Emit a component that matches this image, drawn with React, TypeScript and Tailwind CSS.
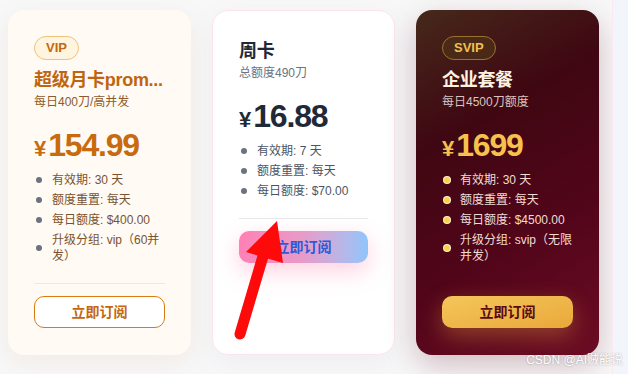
import React from "react";

type Plan = {
  badge?: string;
  title: string;
  subtitle: string;
  price: string;
  features: string[];
  variant: "gold" | "white" | "dark";
};

const plans: Plan[] = [
  {
    badge: "VIP",
    title: "超级月卡prom...",
    subtitle: "每日400刀/高并发",
    price: "154.99",
    features: ["有效期: 30 天", "额度重置: 每天", "每日额度: $400.00", "升级分组: vip（60并发）"],
    variant: "gold",
  },
  {
    title: "周卡",
    subtitle: "总额度490刀",
    price: "16.88",
    features: ["有效期: 7 天", "额度重置: 每天", "每日额度: $70.00"],
    variant: "white",
  },
  {
    badge: "SVIP",
    title: "企业套餐",
    subtitle: "每日4500刀额度",
    price: "1699",
    features: ["有效期: 30 天", "额度重置: 每天", "每日额度: $4500.00", "升级分组: svip（无限并发）"],
    variant: "dark",
  },
];

const styles = {
  gold: {
    card: "bg-[#fffaf3] shadow-[0_8px_28px_rgba(180,120,60,0.10)]",
    badge: "border-[#f1c27c] bg-[#fff4df] text-[#c4670f]",
    title: "text-[#c0650f]",
    subtitle: "text-[#8c5a2c]",
    price: "text-[#c86a0e]",
    dot: "bg-[#6b7280]",
    item: "text-[#7a5230]",
    divider: "bg-[#efe9e1]",
    button: "border border-[#d97b12] bg-white text-[#c4670f]",
  },
  white: {
    card: "bg-white border border-[#fde4ec] shadow-[0_8px_28px_rgba(120,120,140,0.08)]",
    badge: "",
    title: "text-[#1f2937]",
    subtitle: "text-[#6b7280]",
    price: "text-[#1f2937]",
    dot: "bg-[#6b7280]",
    item: "text-[#4b5563]",
    divider: "bg-[#e8e8ec]",
    button:
      "bg-gradient-to-r from-[#ff80b5] via-[#e79bc9] to-[#8ec5fc] text-[#2d5bd6] shadow-[0_8px_22px_rgba(255,120,170,0.35)]",
  },
  dark: {
    card: "bg-[linear-gradient(150deg,#46291a_0%,#3f0712_32%,#52051a_65%,#6c0c24_100%)] shadow-[0_10px_30px_rgba(90,10,30,0.25)]",
    badge: "border-[#9c7030] bg-[#4a2a17] text-[#f1c04f]",
    title: "text-[#fff3e0]",
    subtitle: "text-[#dcc3bd]",
    price: "text-[#f6c24c]",
    dot: "bg-[#fcd04f] ring-1 ring-[#fff3d0]",
    item: "text-[#f2dcd2]",
    divider: "bg-transparent",
    button:
      "bg-gradient-to-br from-[#f5c65a] to-[#e9a83a] text-[#5a0a12] shadow-[0_8px_22px_rgba(240,170,60,0.35)]",
  },
};

function PlanCard({ plan }: { plan: Plan }) {
  const s = styles[plan.variant];
  return (
    <div className={`flex flex-col rounded-2xl px-[26px] pt-[26px] pb-[27px] ${s.card}`}>
      {plan.badge && (
        <div className="mb-[6px] flex">
          <span
            className={`flex h-6 items-center rounded-full border px-[11px] text-[13px] font-bold ${s.badge}`}
          >
            {plan.badge}
          </span>
        </div>
      )}
      <h3 className={`text-[18px] leading-[28px] font-bold tracking-[-0.3px] whitespace-nowrap ${s.title}`}>
        {plan.title}
      </h3>
      <p className={`text-[12px] leading-4 ${s.subtitle}`}>{plan.subtitle}</p>

      <div className={`mt-[15px] flex items-baseline font-bold ${s.price}`}>
        <span className="mr-[2px] text-[22px] leading-10">¥</span>
        <span className="text-[32px] leading-10 tracking-[-1.2px]">{plan.price}</span>
      </div>

      <ul className="mt-px flex flex-col">
        {plan.features.map((f) => (
          <li key={f} className="flex items-center py-[2px]">
            <span className={`mr-[10px] ml-[2px] h-[6px] w-[6px] shrink-0 rounded-full ${s.dot}`} />
            <span className={`text-[12px] leading-4 ${s.item}`}>{f}</span>
          </li>
        ))}
      </ul>

      <div className={`mt-[17px] h-px ${s.divider}`} />

      <button
        className={`mt-[12px] flex h-[32px] items-center justify-center rounded-[10px] text-[14px] font-bold ${s.button}`}
      >
        立即订阅
      </button>
    </div>
  );
}

export default function App() {
  return (
    <div
      className="relative flex h-[374px] w-[628px] overflow-hidden bg-[#f8f8f9]"
      style={{ fontFamily: '"Liberation Sans", "Noto Sans CJK SC", sans-serif' }}
    >
      <div className="grid h-fit w-[612px] grid-cols-[183px_183px_183px] items-stretch gap-[21px] pt-[10px] pl-[8px]">
        {plans.map((p) => (
          <PlanCard key={p.title} plan={p} />
        ))}
      </div>
      <div className="h-full w-4 border-l border-[#fbe9ef] bg-[#f2f5fc]" />

      <svg className="absolute top-0 left-0" width="628" height="374" viewBox="0 0 628 374">
        <line x1="240" y1="334" x2="266" y2="246" stroke="#ff0a0a" strokeWidth="11" strokeLinecap="round" />
        <polygon points="277,221 246,252 283,263" fill="#ff0a0a" />
      </svg>

      <div className="absolute right-[5px] bottom-[5px] text-[12px] text-white [text-shadow:0_0_2px_rgba(0,0,0,0.35)]">
        CSDN @AI贼能说
      </div>
    </div>
  );
}
